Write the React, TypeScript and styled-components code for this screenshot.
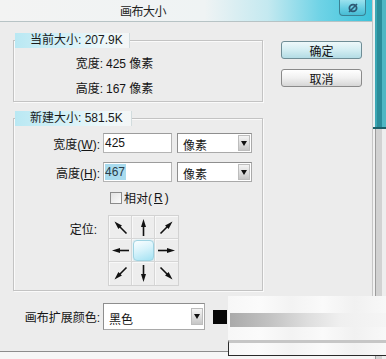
import React from "react";
import styled, { createGlobalStyle } from "styled-components";

const GlobalStyle = createGlobalStyle`
  html, body {
    margin: 0;
    padding: 0;
    background: #f6f6f6;
  }
  body {
    font-family: "Liberation Sans", "Noto Sans CJK SC", sans-serif;
    font-size: 12px;
    color: #141414;
  }
`;

const Screen = styled.div`
  position: relative;
  width: 386px;
  height: 359px;
  overflow: hidden;
  display: flex;
  background: #f6f6f6;
`;

const Dialog = styled.div`
  width: 373px;
  height: 352px;
  flex: none;
  display: flex;
  flex-direction: column;
  box-sizing: border-box;
  background: #ececec;
  border-right: 1px solid #c6c6c6;
  border-bottom: 1px solid #8c8c8c;
`;

const TitleBar = styled.div`
  height: 22px;
  flex: none;
  display: flex;
  align-items: center;
  box-sizing: border-box;
  padding-left: 120px;
  background: linear-gradient(
    90deg,
    #f3f3f3 0%,
    #eff3f4 55%,
    #c4e9f0 72%,
    #6fd3e6 86%,
    #3cc2da 100%
  );
  border-bottom: 1px solid #b7c3c5;
`;

const Title = styled.div`
  font-size: 12px;
  color: #222;
  letter-spacing: -0.5px;
`;

const CloseButton = styled.div`
  margin-left: auto;
  margin-right: 6px;
  align-self: flex-start;
  width: 27px;
  height: 16px;
  box-sizing: border-box;
  display: flex;
  align-items: center;
  justify-content: center;
  border: 1px solid #3b8194;
  border-top: none;
  border-radius: 0 0 4px 4px;
  background: linear-gradient(180deg, #9be2ee 0%, #66cde2 55%, #47bcd4 100%);
`;

const Body = styled.div`
  flex: 1;
  display: flex;
  padding-left: 13px;
`;

const LeftColumn = styled.div`
  width: 250px;
  display: flex;
  flex-direction: column;
  padding-top: 11px;
`;

const Group = styled.fieldset<{ $gap?: number }>`
  margin: ${(p) => p.$gap ?? 0}px 0 0 0;
  padding: 0;
  min-width: 0;
  border: 1px solid #c3c3c3;
  box-shadow: inset 1px 1px 0 #fafafa, 1px 1px 0 #fafafa;
`;

const Legend = styled.legend<{ $width: number }>`
  margin-left: 1px;
  padding: 0 0 0 15px;
  width: ${(p) => p.$width}px;
  height: 15px;
  line-height: 15px;
  box-sizing: border-box;
  white-space: nowrap;
  font-size: 12px;
  color: #1a1a1a;
  background: linear-gradient(90deg, #b9e8f3 0%, #d6f1f7 45%, #eef8fa 80%, #f4f6f6 100%);
  border-right: 1px solid #d2dcde;
`;

const InfoGrid = styled.div`
  display: grid;
  grid-template-columns: 89px auto;
  grid-auto-rows: 25px;
  column-gap: 3px;
  padding: 2px 0 1px 0;
  align-items: center;
`;

const Label = styled.div`
  text-align: right;
  white-space: nowrap;
`;

const Value = styled.div`
  white-space: nowrap;
`;

const FormGrid = styled.div`
  display: grid;
  grid-template-columns: 86px auto;
  grid-template-rows: 20px 20px 13px 69px;
  column-gap: 3px;
  row-gap: 9px;
  padding: 7px 0 8px 0;
  align-items: center;
`;

const FieldLabel = styled.div<{ $top?: boolean }>`
  text-align: right;
  white-space: nowrap;
  align-self: ${(p) => (p.$top ? "start" : "center")};
  padding-right: ${(p) => (p.$top ? 3 : 0)}px;
  margin-top: ${(p) => (p.$top ? 7 : 0)}px;
`;

const Controls = styled.div<{ $top?: boolean }>`
  display: flex;
  align-items: center;
  align-self: ${(p) => (p.$top ? "start" : "center")};
  margin-top: ${(p) => (p.$top ? 2 : 0)}px;
`;

const Underline = styled.span`
  text-decoration: underline;
`;

const TextInput = styled.div`
  width: 69px;
  height: 20px;
  box-sizing: border-box;
  padding-left: 1px;
  display: flex;
  align-items: center;
  background: #fff;
  border: 1px solid #b4b4b4;
  border-top-color: #9c9c9c;
  font-size: 12px;
`;

const Selected = styled.span`
  background: #a9dbee;
  color: #2a3c48;
  padding: 1px 1px 1px 0;
`;

const Select = styled.div<{ $width: number; $height: number }>`
  width: ${(p) => p.$width}px;
  height: ${(p) => p.$height}px;
  margin-left: 5px;
  box-sizing: border-box;
  display: flex;
  align-items: center;
  padding: 0 1px 0 5px;
  background: #fff;
  border: 1px solid #a9a9a9;
  border-top-color: #8e8e8e;
  border-left-color: #8e8e8e;
  font-size: 12px;
`;

const SelectText = styled.span`
  flex: 1;
  padding-top: 3px;
`;

const DropButton = styled.div<{ $height: number }>`
  width: 12px;
  height: ${(p) => p.$height}px;
  box-sizing: border-box;
  display: flex;
  align-items: center;
  justify-content: center;
  border: 1px solid #bdbdbd;
  background: linear-gradient(180deg, #f4f4f4 0%, #dadada 60%, #c6c6c6 100%);

  &::after {
    content: "";
    border-left: 3.5px solid transparent;
    border-right: 3.5px solid transparent;
    border-top: 5px solid #111;
  }
`;

const CheckRow = styled.label`
  display: flex;
  align-items: center;
  gap: 2px;
  margin-left: 7px;
  white-space: nowrap;
`;

const CheckBox = styled.span`
  width: 12px;
  height: 12px;
  box-sizing: border-box;
  border: 1px solid #8b8b8b;
  background: linear-gradient(135deg, #e2e2e2 0%, #fbfbfb 100%);
`;

const AnchorGrid = styled.div`
  margin-left: 5px;
  display: grid;
  grid-template-columns: repeat(3, 23px);
  grid-template-rows: repeat(3, 23px);
  border: 1px solid #d2d2d2;
  background: #ededed;
`;

const AnchorCell = styled.div`
  display: flex;
  align-items: center;
  justify-content: center;
  box-sizing: border-box;
  border-right: 1px solid #d6d6d6;
  border-bottom: 1px solid #d6d6d6;
  box-shadow: inset 1px 1px 0 #f8f8f8;

  &:nth-child(3n) {
    border-right: none;
  }
  &:nth-child(n + 7) {
    border-bottom: none;
  }
`;

const CenterKnob = styled.div`
  width: 21px;
  height: 21px;
  box-sizing: border-box;
  border-radius: 4px;
  border: 1px solid #9fd3e2;
  background: linear-gradient(160deg, #fbfeff 0%, #d8f3fb 45%, #a3e2f3 100%);
  box-shadow: 0 0 2px #b9e6f2;
`;

const ColorRow = styled.div`
  display: flex;
  align-items: center;
  margin-top: 12px;
`;

const ColorLabel = styled.div`
  width: 87px;
  text-align: right;
  white-space: nowrap;
  margin-right: -2px;
`;

const Swatch = styled.div`
  width: 14px;
  height: 14px;
  margin-left: 8px;
  background: #060606;
`;

const RightColumn = styled.div`
  margin-left: 18px;
  padding-top: 19px;
  display: flex;
  flex-direction: column;
  gap: 10px;
`;

const Button = styled.div<{ $primary?: boolean }>`
  width: 81px;
  height: 18px;
  box-sizing: border-box;
  display: flex;
  align-items: center;
  justify-content: center;
  border: 1px solid ${(p) => (p.$primary ? "#6f8d96" : "#8a8a8a")};
  border-radius: 3px;
  font-size: 12px;
  color: #111;
  background: ${(p) =>
    p.$primary
      ? "linear-gradient(180deg, #eef8fa 0%, #d3edf2 50%, #b3dce5 100%)"
      : "linear-gradient(180deg, #ffffff 0%, #f0f0f0 50%, #d6d6d6 100%)"};
`;

const Frame = styled.div`
  flex: 1;
  display: flex;
  flex-direction: column;
`;

const FrameTop = styled.div`
  height: 127px;
  background: linear-gradient(
    90deg,
    #e9f1f2 0 2px,
    #3aa6b3 2px 4px,
    #2a8d9a 4px 9px,
    #4fb7c4 9px
  );
  border-bottom: 2px solid #1d5f68;
`;

const FrameBottom = styled.div`
  flex: 1;
  background: linear-gradient(
    90deg,
    #f1f1f1 0 2px,
    #9c9c9c 2px 3px,
    #d2d2d2 3px 9px,
    #eeeeee 9px
  );
`;

const Smudge = styled.div`
  position: absolute;
  left: 228px;
  top: 296px;
  width: 158px;
  height: 60px;
  background: linear-gradient(
    90deg,
    #f7f7f7 0%,
    #fbfbfb 20%,
    #f3f3f3 40%,
    #fafafa 60%,
    #f1f1f1 80%,
    #f8f8f8 100%
  );
`;

const SmudgeBar = styled.div`
  margin: 17px 0 0 2px;
  height: 14px;
  background: linear-gradient(90deg, #aaaaaa 0%, #c2c2c2 25%, #dedede 50%, #efefef 70%, #f5f5f5 100%);
`;

const SmudgeFoot = styled.div`
  margin-top: 13px;
  height: 12px;
  border-left: 1px solid #2a2a2a;
  border-bottom: 1px solid #2a2a2a;
  border-top: 3px solid #c6c6c6;
`;

const Arrow = ({ angle }: { angle: number }) => (
  <svg width="21" height="21" viewBox="0 0 21 21">
    <g transform={`rotate(${angle} 10.5 10.5)`}>
      <line x1="10.5" y1="19" x2="10.5" y2="8" stroke="#111" strokeWidth="1.6" />
      <polygon points="10.5,2 8,10 13,10" fill="#111" />
    </g>
  </svg>
);

const CloseIcon = () => (
  <svg width="12" height="10" viewBox="0 0 12 10">
    <ellipse cx="6" cy="5" rx="3.6" ry="3.4" fill="none" stroke="#2d5873" strokeWidth="1.8" />
    <line x1="2" y1="9" x2="10" y2="1" stroke="#2d5873" strokeWidth="1.6" />
  </svg>
);

const ANCHORS: (number | null)[] = [-45, 0, 45, -90, null, 90, -135, 180, 135];

function App() {
  return (
    <>
      <GlobalStyle />
      <Screen>
        <Dialog>
          <TitleBar>
            <Title>画布大小</Title>
            <CloseButton>
              <CloseIcon />
            </CloseButton>
          </TitleBar>
          <Body>
            <LeftColumn>
              <Group>
                <Legend $width={115}>当前大小: 207.9K</Legend>
                <InfoGrid>
                  <Label>宽度:</Label>
                  <Value>425 像素</Value>
                  <Label>高度:</Label>
                  <Value>167 像素</Value>
                </InfoGrid>
              </Group>

              <Group $gap={9}>
                <Legend $width={117}>新建大小: 581.5K</Legend>
                <FormGrid>
                  <FieldLabel>
                    宽度(<Underline>W</Underline>):
                  </FieldLabel>
                  <Controls>
                    <TextInput>425</TextInput>
                    <Select $width={75} $height={20}>
                      <SelectText>像素</SelectText>
                      <DropButton $height={16} />
                    </Select>
                  </Controls>

                  <FieldLabel>
                    高度(<Underline>H</Underline>):
                  </FieldLabel>
                  <Controls>
                    <TextInput>
                      <Selected>467</Selected>
                    </TextInput>
                    <Select $width={75} $height={20}>
                      <SelectText>像素</SelectText>
                      <DropButton $height={16} />
                    </Select>
                  </Controls>

                  <div />
                  <Controls>
                    <CheckRow>
                      <CheckBox />
                      相对(<Underline>R</Underline>)
                    </CheckRow>
                  </Controls>

                  <FieldLabel $top>定位:</FieldLabel>
                  <Controls $top>
                    <AnchorGrid>
                      {ANCHORS.map((angle, i) => (
                        <AnchorCell key={i}>
                          {angle === null ? <CenterKnob /> : <Arrow angle={angle} />}
                        </AnchorCell>
                      ))}
                    </AnchorGrid>
                  </Controls>
                </FormGrid>
              </Group>

              <ColorRow>
                <ColorLabel>画布扩展颜色:</ColorLabel>
                <Select $width={102} $height={27}>
                  <SelectText>黑色</SelectText>
                  <DropButton $height={17} />
                </Select>
                <Swatch />
              </ColorRow>
            </LeftColumn>

            <RightColumn>
              <Button $primary>确定</Button>
              <Button>取消</Button>
            </RightColumn>
          </Body>
        </Dialog>
        <Frame>
          <FrameTop />
          <FrameBottom />
        </Frame>
        <Smudge>
          <SmudgeBar />
          <SmudgeFoot />
        </Smudge>
      </Screen>
    </>
  );
}

export default App;
